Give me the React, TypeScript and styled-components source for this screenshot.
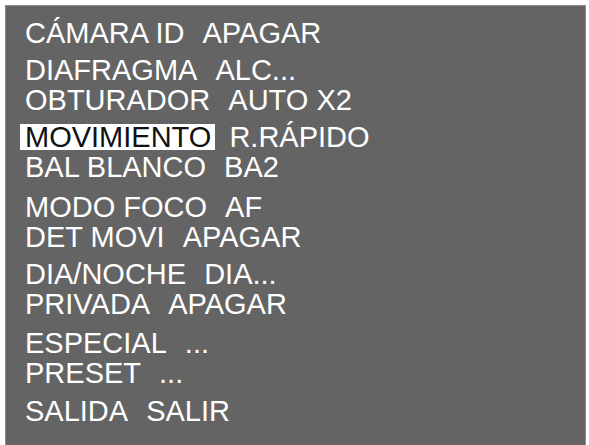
import styled, { createGlobalStyle } from "styled-components";

const GlobalStyle = createGlobalStyle`
  html, body {
    margin: 0;
    padding: 0;
    background: #ffffff;
  }
  body {
    font-family: "Liberation Sans", Arial, sans-serif;
  }
`;

type MenuItem = {
  label: string;
  value: string;
  gap: number;
  selected?: boolean;
};

const items: MenuItem[] = [
  { label: "CÁMARA ID", value: "APAGAR", gap: 0 },
  { label: "DIAFRAGMA", value: "ALC...", gap: 9 },
  { label: "OBTURADOR", value: "AUTO X2", gap: 2 },
  { label: "MOVIMIENTO", value: "R.RÁPIDO", gap: 9, selected: true },
  { label: "BAL BLANCO", value: "BA2", gap: 2 },
  { label: "MODO FOCO", value: "AF", gap: 12 },
  { label: "DET MOVI", value: "APAGAR", gap: 2 },
  { label: "DIA/NOCHE", value: "DIA...", gap: 9 },
  { label: "PRIVADA", value: "APAGAR", gap: 2 },
  { label: "ESPECIAL", value: "...", gap: 11 },
  { label: "PRESET", value: "...", gap: 2 },
  { label: "SALIDA", value: "SALIR", gap: 10 },
];

export default function App() {
  return (
    <>
      <GlobalStyle />
      <Screen>
        <Menu>
          {items.map((item) => (
            <Row key={item.label} $gap={item.gap}>
              <Label $selected={item.selected}>{item.label}</Label>
              <Value>{item.value}</Value>
            </Row>
          ))}
        </Menu>
      </Screen>
    </>
  );
}

const Screen = styled.div`
  margin: 5px 0 0 5px;
  width: 581px;
  height: 440px;
  box-sizing: border-box;
  background: #646464;
  border: 1px solid #8c8c8c;
  border-bottom: none;
  padding: 13px 0 0 19px;
`;

const Menu = styled.div`
  display: flex;
  flex-direction: column;
`;

const Row = styled.div<{ $gap: number }>`
  display: flex;
  align-items: baseline;
  gap: 14px;
  margin-top: ${(p) => p.$gap}px;
  height: 28px;
  line-height: 28px;
  font-size: 29px;
  color: #ffffff;
  white-space: pre;
`;

const Label = styled.span<{ $selected?: boolean }>`
  margin-left: -5px;
  padding: 0 4px 0 5px;
  line-height: 26px;
  background: ${(p) => (p.$selected ? "#ffffff" : "transparent")};
  color: ${(p) => (p.$selected ? "#111111" : "#ffffff")};
`;

const Value = styled.span`
  color: #ffffff;
`;
